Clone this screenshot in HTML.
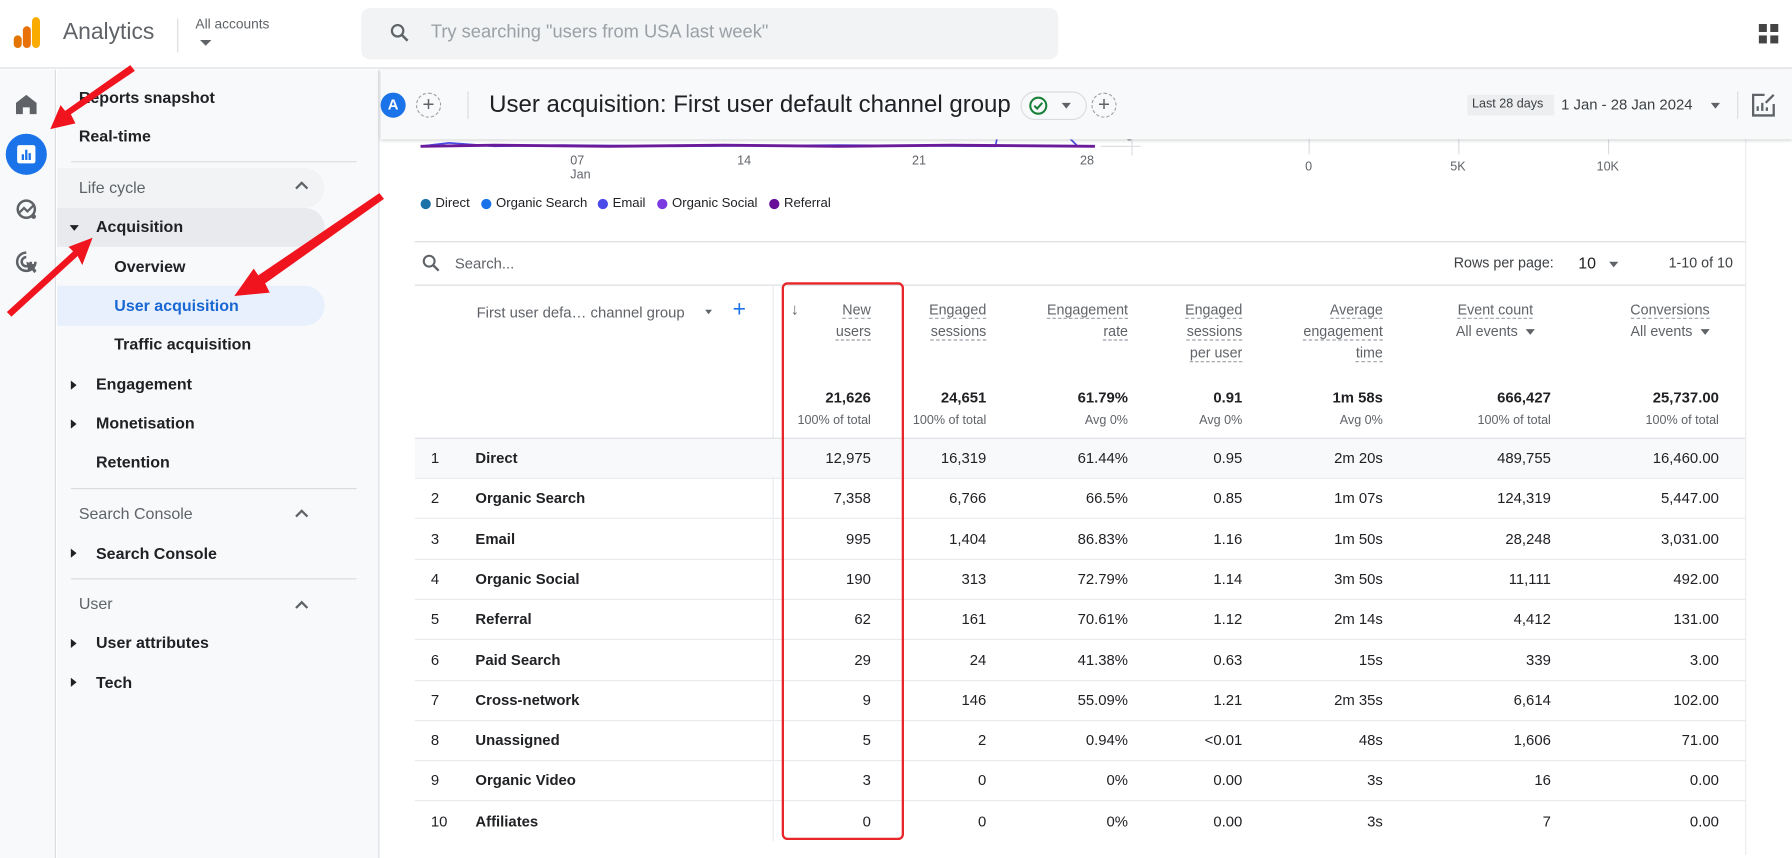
<!DOCTYPE html>
<html><head><meta charset="utf-8">
<style>
*{box-sizing:border-box;margin:0;padding:0}
html,body{width:1792px;height:854px;overflow:hidden;background:#fff}
#s{position:absolute;left:0;top:0;width:1568px;height:748px;transform:scale(1.142857);transform-origin:0 0;font-family:"Liberation Sans",Arial,sans-serif;color:#202124}
.a{position:absolute;white-space:nowrap}
.nav{font-size:14px;font-weight:bold;color:#202124}
.hd{font-size:14px;color:#5f6368}
.th{font-size:12.5px;color:#5f6368;text-align:right;line-height:19px}
.th u{text-decoration:none;border-bottom:1px dashed #9aa0a6}
.num{font-size:13px;text-align:right}
.tri{display:inline-block;width:0;height:0;border-left:4px solid transparent;border-right:4px solid transparent;border-top:5px solid #5f6368;vertical-align:middle}
.a>.tri{display:block}
.a>.tri.il{display:inline-block}
.rt{position:absolute;width:0;height:0;border-top:4px solid transparent;border-bottom:4px solid transparent;border-left:5px solid #202124}
.hr{position:absolute;height:1px;background:#dadce0}
</style></head><body><div id="s">
<!-- top header -->
<div class="a" style="left:0;top:0;width:1568px;height:60px;background:#fff;border-bottom:1px solid #dadce0"></div>
<div class="a" style="left:12px;top:31px;width:7px;height:11px;border-radius:4px;background:#e37400"></div>
<div class="a" style="left:20px;top:23px;width:7px;height:19px;border-radius:4px;background:#e8710a"></div>
<div class="a" style="left:28px;top:15px;width:7px;height:27px;border-radius:4px;background:#f9ab00"></div>
<div class="a" style="left:55px;top:17px;font-size:20px;color:#5f6368">Analytics</div>
<div class="a" style="left:155px;top:16px;width:1px;height:30px;background:#dadce0"></div>
<div class="a" style="left:171px;top:14px;font-size:12px;color:#5f6368">All accounts</div>
<div class="a" style="left:175px;top:35px"><span class="tri" style="border-top-color:#5f6368;border-width:5px 5px 0 5px"></span></div>
<div class="a" style="left:316px;top:7px;width:610px;height:45px;border-radius:8px;background:#f1f3f4"></div>
<svg class="a" style="left:340px;top:19px" width="20" height="20" viewBox="0 0 24 24"><circle cx="9.5" cy="9.5" r="6" fill="none" stroke="#5f6368" stroke-width="2.3"/><path d="M14 14l6 6" stroke="#5f6368" stroke-width="2.6"/></svg>
<div class="a" style="left:377px;top:20px;font-size:16px;color:#9aa0a6">Try searching "users from USA last week"</div>
<div class="a" style="left:1539px;top:21px;width:7px;height:7px;background:#444"></div>
<div class="a" style="left:1549px;top:21px;width:7px;height:7px;background:#444"></div>
<div class="a" style="left:1539px;top:31px;width:7px;height:7px;background:#444"></div>
<div class="a" style="left:1549px;top:31px;width:7px;height:7px;background:#444"></div>
<!-- rail -->
<div class="a" style="left:0;top:61px;width:49px;height:690px;background:#f8f9fa;border-right:1px solid #dadce0"></div>
<svg class="a" style="left:13px;top:82px" width="20" height="18" viewBox="0 0 20 18"><path d="M10 1L1 8v10h6v-6h6v6h6V8z" fill="#5f6368"/></svg>
<div class="a" style="left:5px;top:117px;width:36px;height:36px;border-radius:50%;background:#1a73e8"></div>
<div class="a" style="left:15px;top:127px;width:16px;height:16px;border-radius:2px;background:#fff"></div>
<div class="a" style="left:19px;top:135px;width:2px;height:5px;background:#1a73e8"></div>
<div class="a" style="left:22px;top:131px;width:2px;height:9px;background:#1a73e8"></div>
<div class="a" style="left:25px;top:134px;width:2px;height:6px;background:#1a73e8"></div>
<svg class="a" style="left:13px;top:173px" width="20" height="20" viewBox="0 0 20 20"><circle cx="10" cy="10" r="7.5" fill="none" stroke="#5f6368" stroke-width="2.2"/><path d="M4 13l4-4 3 3 5-5" fill="none" stroke="#5f6368" stroke-width="2"/><circle cx="16.5" cy="16.5" r="2" fill="#5f6368"/></svg>
<svg class="a" style="left:13px;top:219px" width="22" height="22" viewBox="0 0 22 22"><path d="M10 2a8 8 0 1 0 8 8" fill="none" stroke="#5f6368" stroke-width="2.2"/><path d="M10 6a4 4 0 1 0 4 4" fill="none" stroke="#5f6368" stroke-width="2.2"/><path d="M10 10l9 3-3 1 3 4-2 2-3-4-2 3z" fill="#5f6368"/></svg>
<!-- sidebar -->
<div class="a" style="left:50px;top:61px;width:282px;height:690px;background:#f8f9fa;border-right:1px solid #dadce0"></div>
<div class="a nav" style="left:69px;top:77px">Reports snapshot</div>
<div class="a nav" style="left:69px;top:111px">Real-time</div>
<div class="hr" style="left:62px;top:141px;width:250px"></div>
<div class="a" style="left:50px;top:147px;width:234px;height:35px;border-radius:0 18px 18px 0;background:#f1f3f4"></div>
<div class="a hd" style="left:69px;top:156px">Life cycle</div>
<svg class="a" style="left:258px;top:158px" width="12" height="8"><path d="M1 7l5-5 5 5" fill="none" stroke="#5f6368" stroke-width="2"/></svg>
<div class="a" style="left:50px;top:182px;width:234px;height:34px;border-radius:0 18px 18px 0;background:#e8eaed"></div>
<div class="a" style="left:61px;top:197px"><span class="tri" style="border-top-color:#202124"></span></div>
<div class="a nav" style="left:84px;top:190px">Acquisition</div>
<div class="a nav" style="left:100px;top:225px">Overview</div>
<div class="a" style="left:50px;top:250px;width:234px;height:35px;border-radius:0 18px 18px 0;background:#e8f0fe"></div>
<div class="a nav" style="left:100px;top:259px;color:#1967d2">User acquisition</div>
<div class="a nav" style="left:100px;top:293px">Traffic acquisition</div>
<div class="rt" style="left:62px;top:333px"></div><div class="a nav" style="left:84px;top:328px">Engagement</div>
<div class="rt" style="left:62px;top:367px"></div><div class="a nav" style="left:84px;top:362px">Monetisation</div>
<div class="a nav" style="left:84px;top:396px">Retention</div>
<div class="hr" style="left:62px;top:427px;width:250px"></div>
<div class="a hd" style="left:69px;top:441px">Search Console</div>
<svg class="a" style="left:258px;top:445px" width="12" height="8"><path d="M1 7l5-5 5 5" fill="none" stroke="#5f6368" stroke-width="2"/></svg>
<div class="rt" style="left:62px;top:480px"></div><div class="a nav" style="left:84px;top:476px">Search Console</div>
<div class="hr" style="left:62px;top:506px;width:250px"></div>
<div class="a hd" style="left:69px;top:520px">User</div>
<svg class="a" style="left:258px;top:525px" width="12" height="8"><path d="M1 7l5-5 5 5" fill="none" stroke="#5f6368" stroke-width="2"/></svg>
<div class="rt" style="left:62px;top:559px"></div><div class="a nav" style="left:84px;top:554px">User attributes</div>
<div class="rt" style="left:62px;top:593px"></div><div class="a nav" style="left:84px;top:589px">Tech</div>
<!-- chart area -->
<div class="a" style="left:333px;top:118px;width:1235px;height:630px;background:#fff"></div>
<svg class="a" style="left:333px;top:118px" width="1235" height="30" viewBox="0 0 1235 30">
<path d="M35 10 L60 7 L100 10 L160 9 L260 10 L400 9 L538 10 L540 0 M600 0 L610 10 L625 10" fill="none" stroke="#4c4ce6" stroke-width="1.5"/>
<path d="M35 10 L100 9 L200 10 L300 9 L400 10 L500 9 L625 10" fill="none" stroke="#6a1b9a" stroke-width="2.5"/>
<path d="M630 10 L665 10" stroke="#dadce0"/>
</svg>
<div class="a" style="left:985px;top:114px;font-size:11px;color:#5f6368">0</div>
<div class="a" style="left:990px;top:122px;width:1px;height:14px;background:#dadce0"></div>
<div class="a" style="left:1145px;top:122px;width:1px;height:13px;background:#dadce0"></div>
<div class="a" style="left:1276px;top:122px;width:1px;height:13px;background:#dadce0"></div>
<div class="a" style="left:1407px;top:122px;width:1px;height:13px;background:#dadce0"></div>
<div class="a" style="left:1527px;top:122px;width:1px;height:626px;background:#e8eaed"></div>
<div class="a" style="left:1142px;top:140px;font-size:11px;color:#5f6368">0</div>
<div class="a" style="left:1269px;top:140px;font-size:11px;color:#5f6368">5K</div>
<div class="a" style="left:1397px;top:140px;font-size:11px;color:#5f6368">10K</div>
<div class="a" style="left:499px;top:135px;font-size:11px;color:#5f6368;line-height:12px">07<br>Jan</div>
<div class="a" style="left:645px;top:135px;font-size:11px;color:#5f6368">14</div>
<div class="a" style="left:798px;top:135px;font-size:11px;color:#5f6368">21</div>
<div class="a" style="left:945px;top:135px;font-size:11px;color:#5f6368">28</div>
<div class="a" style="left:368px;top:174px;width:9px;height:9px;border-radius:50%;background:#1a73a8"></div>
<div class="a" style="left:381px;top:172px;font-size:11.5px">Direct</div>
<div class="a" style="left:421px;top:174px;width:9px;height:9px;border-radius:50%;background:#1a73e8"></div>
<div class="a" style="left:434px;top:172px;font-size:11.5px">Organic Search</div>
<div class="a" style="left:523px;top:174px;width:9px;height:9px;border-radius:50%;background:#4a4ae8"></div>
<div class="a" style="left:536px;top:172px;font-size:11.5px">Email</div>
<div class="a" style="left:575px;top:174px;width:9px;height:9px;border-radius:50%;background:#7b3be0"></div>
<div class="a" style="left:588px;top:172px;font-size:11.5px">Organic Social</div>
<div class="a" style="left:673px;top:174px;width:9px;height:9px;border-radius:50%;background:#6a0f9a"></div>
<div class="a" style="left:686px;top:172px;font-size:11.5px">Referral</div>
<!-- sub header -->
<div class="a" style="left:333px;top:61px;width:1235px;height:61px;background:#f8f9fa;box-shadow:0 1px 3px rgba(60,64,67,.3)"></div>
<div class="a" style="left:333px;top:81px;width:22px;height:22px;border-radius:50%;background:#1a73e8;color:#fff;font-size:13px;font-weight:bold;text-align:center;line-height:22px">A</div>
<div class="a" style="left:364px;top:81px;width:22px;height:22px;border-radius:50%;border:1px dashed #9aa0a6;color:#5f6368;font-size:18px;text-align:center;line-height:19px">+</div>
<div class="a" style="left:409px;top:80px;width:1px;height:24px;background:#dadce0"></div>
<div class="a" style="left:428px;top:80px;font-size:21px">User acquisition: First user default channel group</div>
<div class="a" style="left:893px;top:80px;width:58px;height:25px;border-radius:13px;border:1px solid #dadce0"></div>
<svg class="a" style="left:900px;top:84px" width="17" height="17"><circle cx="8.5" cy="8.5" r="7" fill="none" stroke="#188038" stroke-width="1.8"/><path d="M5 8.5l2.5 2.5 4.5-5" fill="none" stroke="#188038" stroke-width="1.8"/></svg>
<div class="a" style="left:929px;top:90px"><span class="tri"></span></div>
<div class="a" style="left:955px;top:81px;width:22px;height:22px;border-radius:50%;border:1px dashed #9aa0a6;color:#5f6368;font-size:18px;text-align:center;line-height:19px">+</div>
<div class="a" style="left:1284px;top:83px;width:76px;height:18px;background:#eceef0"></div>
<div class="a" style="left:1288px;top:85px;font-size:11px;color:#3c4043">Last 28 days</div>
<div class="a" style="left:1366px;top:84px;font-size:13px;color:#3c4043">1 Jan - 28 Jan 2024</div>
<div class="a" style="left:1497px;top:90px"><span class="tri"></span></div>
<div class="a" style="left:1520px;top:80px;width:1px;height:24px;background:#dadce0"></div>
<svg class="a" style="left:1532px;top:81px" width="22" height="22" viewBox="0 0 22 22"><path d="M12 2H2v18h18V10" fill="none" stroke="#5f6368" stroke-width="2"/><path d="M6 16v-4M10 16V9M14 16v-3" stroke="#5f6368" stroke-width="2"/><path d="M13 9l7-7" stroke="#5f6368" stroke-width="2"/></svg>
<!-- table -->
<div class="hr" style="left:363px;top:211px;width:1164px"></div>
<svg class="a" style="left:368px;top:221px" width="19" height="19" viewBox="0 0 24 24"><circle cx="9.5" cy="9.5" r="6" fill="none" stroke="#5f6368" stroke-width="2.3"/><path d="M14 14l6 6" stroke="#5f6368" stroke-width="2.6"/></svg>
<div class="a" style="left:398px;top:223px;font-size:13px;color:#5f6368">Search...</div>
<div class="a" style="left:1272px;top:223px;font-size:12.5px;color:#3c4043">Rows per page:</div>
<div class="a" style="left:1381px;top:222px;font-size:14px">10</div>
<div class="a" style="left:1408px;top:229px"><span class="tri"></span></div>
<div class="a" style="left:1460px;top:223px;font-size:12.5px;color:#3c4043">1-10 of 10</div>
<div class="hr" style="left:363px;top:249px;width:1164px"></div>
<div class="a" style="left:676px;top:250px;width:1px;height:486px;background:#e8eaed"></div>
<div class="a" style="left:417px;top:266px;font-size:13px;color:#5f6368">First user defa… channel group</div>
<div class="a" style="left:617px;top:271px"><span class="tri" style="border-width:4px 3px 0 3px"></span></div>
<div class="a" style="left:641px;top:260px;font-size:20px;color:#1a73e8">+</div>
<div class="a" style="left:692px;top:262px;font-size:14px;color:#5f6368">↓</div>
<div class="a th" style="right:806px;top:262px"><u>New</u><br><u>users</u></div>
<div class="a th" style="right:705px;top:262px"><u>Engaged</u><br><u>sessions</u></div>
<div class="a th" style="right:581px;top:262px"><u>Engagement</u><br><u>rate</u></div>
<div class="a th" style="right:481px;top:262px"><u>Engaged</u><br><u>sessions</u><br><u>per user</u></div>
<div class="a th" style="right:358px;top:262px"><u>Average</u><br><u>engagement</u><br><u>time</u></div>
<div class="a th" style="right:225px;top:262px;text-align:center"><u>Event count</u><br>All events &nbsp;<span class="tri il"></span></div>
<div class="a th" style="right:72px;top:262px;text-align:center"><u>Conversions</u><br>All events &nbsp;<span class="tri il"></span></div>
<div class="a num" style="right:806px;top:340px;font-weight:bold">21,626</div>
<div class="a num" style="right:705px;top:340px;font-weight:bold">24,651</div>
<div class="a num" style="right:581px;top:340px;font-weight:bold">61.79%</div>
<div class="a num" style="right:481px;top:340px;font-weight:bold">0.91</div>
<div class="a num" style="right:358px;top:340px;font-weight:bold">1m 58s</div>
<div class="a num" style="right:211px;top:340px;font-weight:bold">666,427</div>
<div class="a num" style="right:64px;top:340px;font-weight:bold">25,737.00</div>
<div class="a num" style="right:806px;top:362px;font-size:11px;color:#5f6368">100% of total</div>
<div class="a num" style="right:705px;top:362px;font-size:11px;color:#5f6368">100% of total</div>
<div class="a num" style="right:581px;top:362px;font-size:11px;color:#5f6368">Avg 0%</div>
<div class="a num" style="right:481px;top:362px;font-size:11px;color:#5f6368">Avg 0%</div>
<div class="a num" style="right:358px;top:362px;font-size:11px;color:#5f6368">Avg 0%</div>
<div class="a num" style="right:211px;top:362px;font-size:11px;color:#5f6368">100% of total</div>
<div class="a num" style="right:64px;top:362px;font-size:11px;color:#5f6368">100% of total</div>
<div class="hr" style="left:363px;top:383px;width:1164px"></div>
<div class="a" style="left:363px;top:384px;width:1164px;height:34px;background:#f8f9fa"></div>
<div id="rows"></div>
<!-- red box -->
<div class="a" style="left:684px;top:247px;width:107px;height:488px;border:2px solid #e8262a;border-radius:5px"></div>
<!-- arrows -->
<svg class="a" style="left:0;top:0" width="400" height="300" viewBox="0 0 400 300">
<g fill="#f0141e">
<polygon points="114,57 118,62 62,100 66,108 44,113 53,92 57,97"/>
<polygon points="6,273 10,277 68,224 72,232 81,208 60,216 64,220"/>
<polygon points="332,169 336,174 232,248 236,256 205,259 222,235 226,241"/>
</g></svg>
</div>
<script>
var d=[["1","Direct","12,975","16,319","61.44%","0.95","2m 20s","489,755","16,460.00"],
["2","Organic Search","7,358","6,766","66.5%","0.85","1m 07s","124,319","5,447.00"],
["3","Email","995","1,404","86.83%","1.16","1m 50s","28,248","3,031.00"],
["4","Organic Social","190","313","72.79%","1.14","3m 50s","11,111","492.00"],
["5","Referral","62","161","70.61%","1.12","2m 14s","4,412","131.00"],
["6","Paid Search","29","24","41.38%","0.63","15s","339","3.00"],
["7","Cross-network","9","146","55.09%","1.21","2m 35s","6,614","102.00"],
["8","Unassigned","5","2","0.94%","<0.01","48s","1,606","71.00"],
["9","Organic Video","3","0","0%","0.00","3s","16","0.00"],
["10","Affiliates","0","0","0%","0.00","3s","7","0.00"]];
var r=[806,705,581,481,358,211,64],h="";
for(var i=0;i<10;i++){var y=393+i*35.3;
h+='<div class="a" style="left:377px;top:'+y+'px;font-size:13px">'+d[i][0]+'</div>';
h+='<div class="a" style="left:416px;top:'+y+'px;font-size:13px;font-weight:bold">'+d[i][1]+'</div>';
for(var j=0;j<7;j++)h+='<div class="a num" style="right:'+r[j]+'px;top:'+y+'px">'+d[i][j+2].replace("<","&lt;")+'</div>';
if(i<9)h+='<div class="hr" style="left:363px;top:'+(y+25)+'px;width:1164px;background:#e8eaed"></div>';}
document.getElementById("rows").outerHTML=h;
</script>
</body></html>
